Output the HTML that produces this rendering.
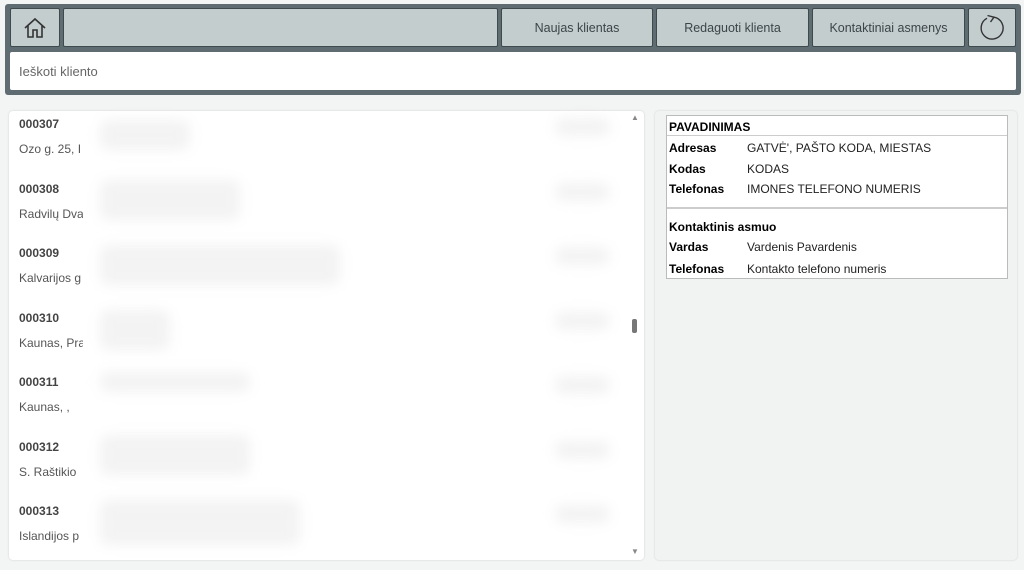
<!DOCTYPE html>
<html><head><meta charset="utf-8"><style>
*{box-sizing:border-box;margin:0;padding:0}
body{width:1024px;height:570px;background:#f3f4f4;font-family:"Liberation Sans",sans-serif;position:relative;overflow:hidden}
.abs{position:absolute}
.hdr{left:5px;top:4px;width:1016px;height:91px;background:#5f6c72;border-radius:3px}
.btn{position:absolute;top:8px;height:39px;background:#c3cdce;border:1px solid #3f4a4f;border-radius:2px;font-size:12.5px;color:#3c4448;display:flex;align-items:center;justify-content:center}
.search{left:10px;top:52px;width:1006px;height:38px;background:#fff;border-radius:2px;font-size:13px;color:#666;padding:12px 9px}
.panel{background:#fff;border-radius:4px;box-shadow:0 0 2px rgba(0,0,0,.15)}
.id{position:absolute;left:19px;font-size:12px;font-weight:bold;color:#444}
.ad{position:absolute;left:19px;font-size:12px;color:#555}
.blur{position:absolute;left:83px;top:113px;width:547px;height:444px;background:#fff}
.sm{position:absolute;background:#f3f3f3;border-radius:8px;filter:blur(6px)}
.tbl{left:666px;top:115px;width:342px;height:164px;border:1px solid #bbb;background:#fff;font-size:12px;color:#222}
.tbl div{position:absolute}
b{font-weight:bold;color:#000}
</style></head><body>
<div class="abs hdr"></div>
<div class="btn" style="left:10px;width:50px"><svg width="26" height="26" viewBox="0 0 26 26" fill="none" stroke="#333" stroke-width="1.6"><path d="M3 13 L13 4 L23 13"/><path d="M6 11 V22 H11 V15 H15 V22 H20 V11"/></svg></div>
<div class="btn" style="left:63px;width:435px"></div>
<div class="btn" style="left:501px;width:152px">Naujas klientas</div>
<div class="btn" style="left:656px;width:153px">Redaguoti klienta</div>
<div class="btn" style="left:812px;width:153px">Kontaktiniai asmenys</div>
<div class="btn" style="left:968px;width:48px"><svg width="30" height="30" viewBox="0 0 30 30" fill="none" stroke="#333" stroke-width="1.4"><path d="M17 4.2 A11 11 0 1 1 10 5.3"/><path d="M10.5 2.5 L17 4.2 L13.5 9"/></svg></div>
<div class="abs search">Ieškoti kliento</div>
<div class="abs panel" style="left:9px;top:111px;width:635px;height:449px"></div>
<div class="abs panel" style="left:655px;top:111px;width:362px;height:449px;background:#f1f2f2"></div>
<div class="id" style="top:117px">000307</div><div class="ad" style="top:142px">Ozo g. 25, I</div>
<div class="id" style="top:182px">000308</div><div class="ad" style="top:207px">Radvilų Dva</div>
<div class="id" style="top:246px">000309</div><div class="ad" style="top:271px">Kalvarijos g</div>
<div class="id" style="top:311px">000310</div><div class="ad" style="top:336px">Kaunas, Pra</div>
<div class="id" style="top:375px">000311</div><div class="ad" style="top:400px">Kaunas, ,</div>
<div class="id" style="top:440px">000312</div><div class="ad" style="top:465px">S. Raštikio</div>
<div class="id" style="top:504px">000313</div><div class="ad" style="top:529px">Islandijos p</div>
<div class="blur"></div>
<div class="sm" style="left:100px;top:120px;width:90px;height:30px"></div>
<div class="sm" style="left:100px;top:180px;width:140px;height:40px"></div>
<div class="sm" style="left:100px;top:245px;width:240px;height:40px"></div>
<div class="sm" style="left:100px;top:310px;width:70px;height:40px"></div>
<div class="sm" style="left:100px;top:372px;width:150px;height:20px"></div>
<div class="sm" style="left:100px;top:435px;width:150px;height:40px"></div>
<div class="sm" style="left:100px;top:500px;width:200px;height:45px"></div>
<div class="sm" style="left:555px;top:118px;width:55px;height:18px"></div>
<div class="sm" style="left:555px;top:183px;width:55px;height:18px"></div>
<div class="sm" style="left:555px;top:247px;width:55px;height:18px"></div>
<div class="sm" style="left:555px;top:312px;width:55px;height:18px"></div>
<div class="sm" style="left:555px;top:376px;width:55px;height:18px"></div>
<div class="sm" style="left:555px;top:441px;width:55px;height:18px"></div>
<div class="sm" style="left:555px;top:505px;width:55px;height:18px"></div>
<div class="abs" style="left:631px;top:113px;font-size:8px;color:#888">▲</div>
<div class="abs" style="left:631px;top:547px;font-size:8px;color:#888">▼</div>
<div class="abs" style="left:632px;top:319px;width:5px;height:14px;background:#777;border-radius:2px"></div>
<div class="abs tbl">
<div style="left:2px;top:4px"><b>PAVADINIMAS</b></div>
<div style="left:0;top:19px;width:340px;border-top:1px solid #ccc"></div>
<div style="left:2px;top:25px"><b>Adresas</b></div><div style="left:80px;top:25px">GATVĖ', PAŠTO KODA, MIESTAS</div>
<div style="left:2px;top:46px"><b>Kodas</b></div><div style="left:80px;top:46px">KODAS</div>
<div style="left:2px;top:66px"><b>Telefonas</b></div><div style="left:80px;top:66px">IMONES TELEFONO NUMERIS</div>
<div style="left:0;top:91px;width:340px;border-top:2px solid #ccc"></div>
<div style="left:2px;top:104px"><b>Kontaktinis asmuo</b></div>
<div style="left:2px;top:124px"><b>Vardas</b></div><div style="left:80px;top:124px">Vardenis Pavardenis</div>
<div style="left:2px;top:146px"><b>Telefonas</b></div><div style="left:80px;top:146px">Kontakto telefono numeris</div>
</div>
</body></html>
